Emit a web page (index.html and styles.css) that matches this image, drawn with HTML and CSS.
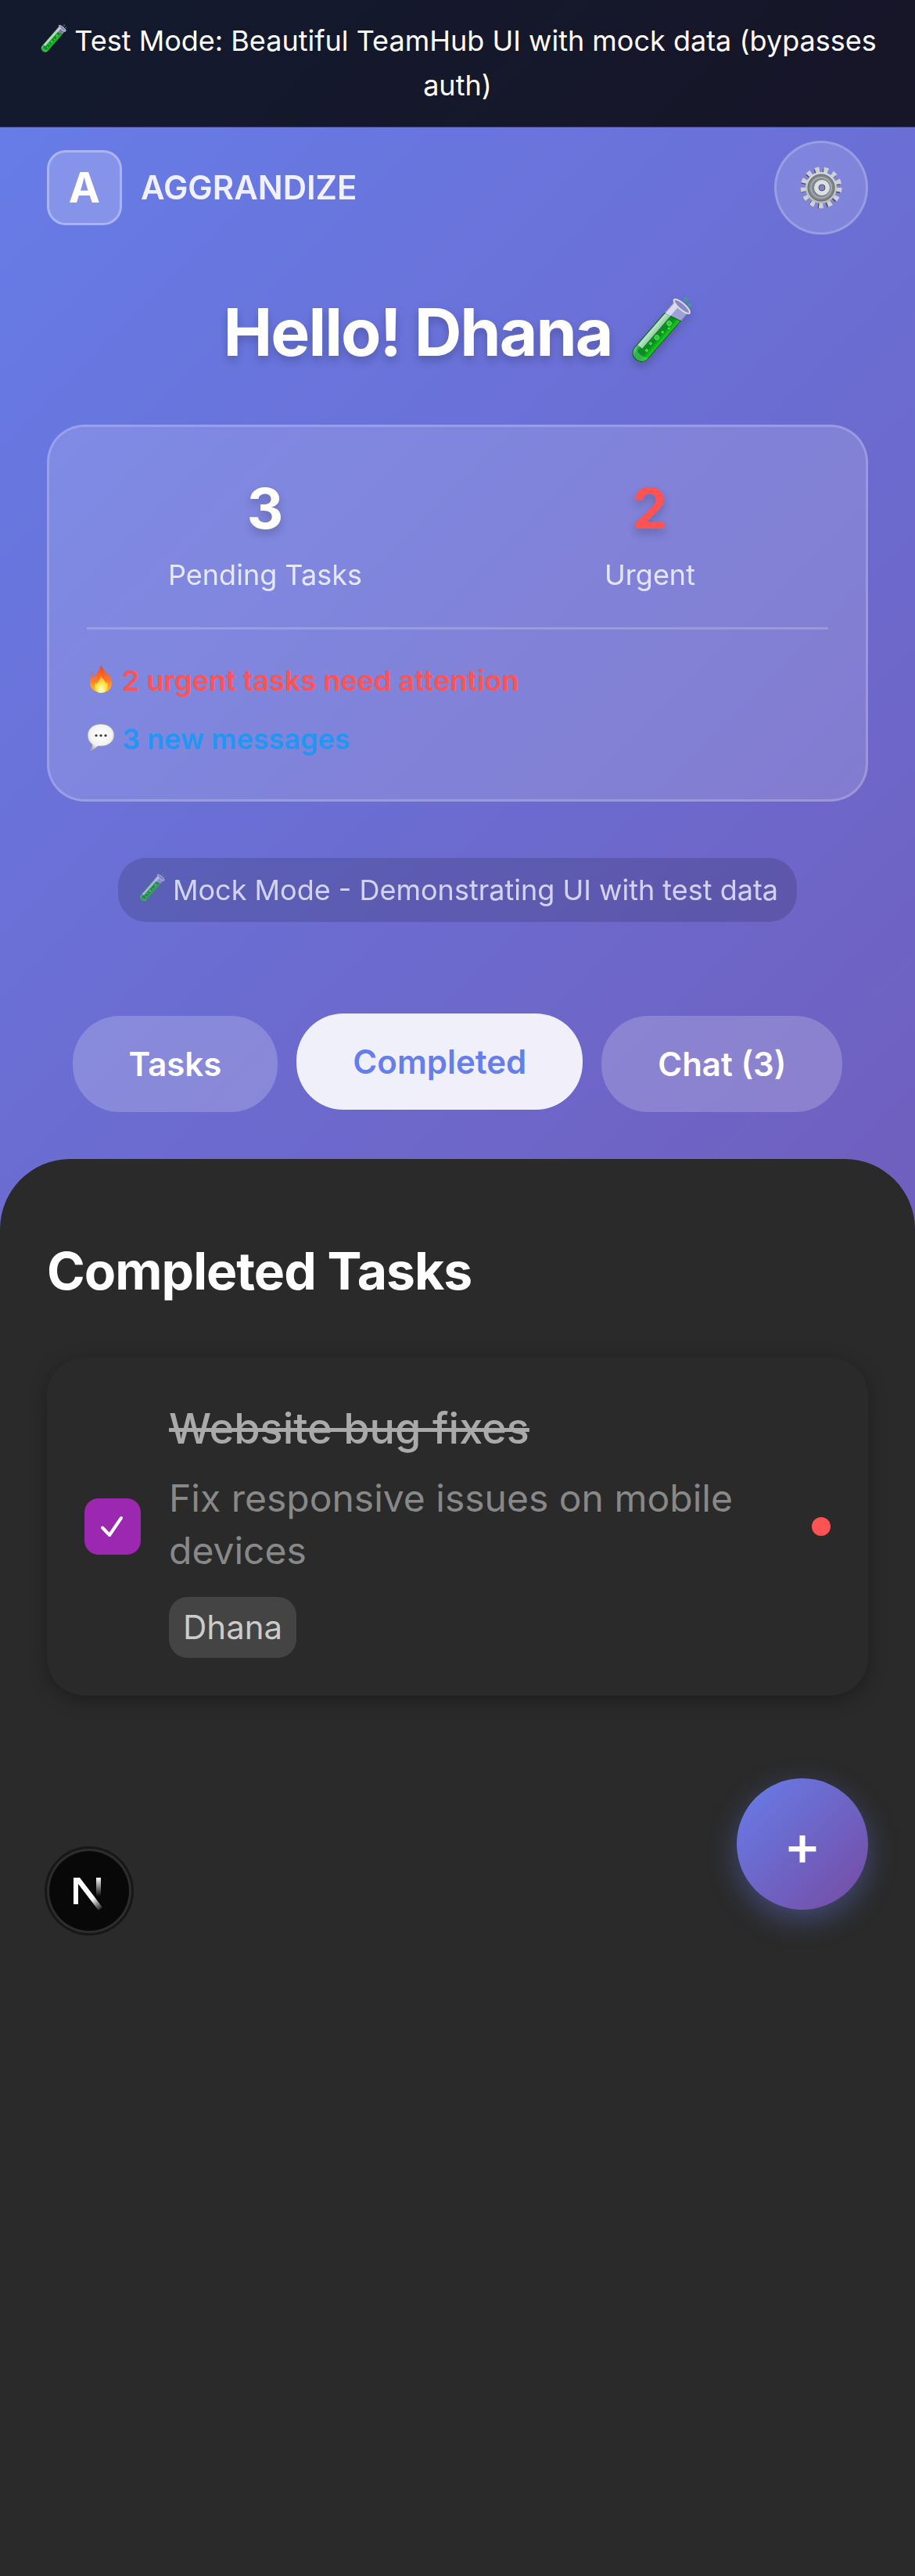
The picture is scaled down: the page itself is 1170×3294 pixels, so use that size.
FILE: index.html
```html
<!DOCTYPE html>
<html lang="en">
<head>
<meta charset="utf-8">
<meta name="viewport" content="width=device-width, initial-scale=1">
<title>Aggrandize TeamHub</title>
<link rel="stylesheet" href="styles.css">
</head>
<body>
<svg class="defs" aria-hidden="true">
  <defs>
    <linearGradient id="liquid" x1="0" y1="0" x2="1" y2="0">
      <stop offset="0" stop-color="#6fd08a"/><stop offset=".3" stop-color="#0c8a2c"/>
      <stop offset=".65" stop-color="#0a8f1c"/><stop offset="1" stop-color="#19d81d"/>
    </linearGradient>
    <linearGradient id="flame" x1="0" y1="0" x2="0" y2="1">
      <stop offset="0" stop-color="#f0401c"/><stop offset=".55" stop-color="#ff7a2a"/><stop offset="1" stop-color="#ffc42c"/>
    </linearGradient>
    <radialGradient id="core" cx=".5" cy=".8" r=".7">
      <stop offset="0" stop-color="#fffbe0"/><stop offset=".5" stop-color="#ffe94a"/><stop offset="1" stop-color="#ffb52e"/>
    </radialGradient>
    <radialGradient id="bubble" cx=".5" cy=".4" r=".6">
      <stop offset="0" stop-color="#ffffff"/><stop offset=".7" stop-color="#f2f2f2"/><stop offset="1" stop-color="#b4b4b8"/>
    </radialGradient>
    <linearGradient id="steel" x1="0" y1="0" x2="0" y2="1">
      <stop offset="0" stop-color="#d6dade"/><stop offset="1" stop-color="#b4b7ba"/>
    </linearGradient>
    <linearGradient id="fadeStem" x1="0" y1="0" x2="0" y2="1">
      <stop offset="0" stop-color="#fff"/><stop offset="1" stop-color="#fff" stop-opacity="0"/>
    </linearGradient>
    <linearGradient id="fadeLeg" gradientUnits="userSpaceOnUse" x1="24" y1="28" x2="36" y2="43">
      <stop offset="0" stop-color="#fff"/><stop offset="1" stop-color="#fff" stop-opacity="0"/>
    </linearGradient>
    <symbol id="tube" viewBox="0 0 84 84" overflow="visible">
      <g transform="translate(1 1) rotate(41 42 42)">
        <path d="M31-3V77a11 11 0 0 0 22 0V-3z" fill="#dfe3f4" fill-opacity=".5" stroke="#8d93a5" stroke-width="1"/>
        <path d="M31 19L53 13v64a11 11 0 0 1-22 0z" fill="url(#liquid)" stroke="#0c5c22" stroke-width="1"/>
        <path d="M32 0h7v72h-7z" fill="#fff" fill-opacity=".6"/>
        <path d="M31 76q11 7 22 0a11 11 0 0 1-22 0z" fill="#59d67a" fill-opacity=".5"/>
        <g fill="#2ecb3c" stroke="#8cf08d" stroke-width=".6"><circle cx="44" cy="25" r="3"/><circle cx="44" cy="49" r="3"/><circle cx="45" cy="39" r="1.300"/><circle cx="43" cy="60" r="1.500"/><circle cx="45" cy="70" r="1.500"/><circle cx="48" cy="30" r="1"/></g>
        <ellipse cx="42" cy="-2" rx="13" ry="4" fill="#8689c8" stroke="#e0dcd8" stroke-width="2"/>
      </g>
      <g fill="none" stroke="#2fae78" stroke-width="1.500"><circle cx="77" cy="1" r="2"/><circle cx="82" cy="8" r="1.500"/></g>
    </symbol>
  </defs>
</svg>

<p class="banner"><svg class="emoji" aria-hidden="true"><use href="#tube"/></svg> Test Mode: Beautiful TeamHub UI with mock data (bypasses auth)</p>

<header class="hero">
  <div class="topbar">
    <div class="brand"><span class="logo">A</span><span class="brand-name">AGGRANDIZE</span></div>
    <button class="settings" type="button" aria-label="Settings">
      <svg class="gear" viewBox="-27 -27 54 54" aria-hidden="true">
        <g fill="none" stroke="#4f4a48" stroke-width="8" transform="translate(-1 1)"><circle r="21.500" stroke-dasharray="5.400 4.991"/></g>
        <g fill="none" stroke="#cdd1d5" stroke-width="9"><circle r="22" stroke-dasharray="5.200 5.433"/></g>
        <circle r="20" fill="url(#steel)"/>
        <circle r="17" fill="#7d8589" stroke="#5f676b"/>
        <circle r="13" fill="none" stroke="#a5abae" stroke-width="2"/>
        <circle r="10" fill="#858c90"/>
        <circle cx="1" r="7" fill="none" stroke="#dcdfe4" stroke-width="6"/>
        <circle cx="1" r="4" fill="#7f82c8" stroke="#54585c"/>
      </svg>
    </button>
  </div>

  <h1 class="greeting">Hello! Dhana <svg class="emoji" aria-hidden="true"><use href="#tube"/></svg></h1>

  <section class="summary">
    <div class="stats">
      <div class="stat"><span class="stat-value">3</span><span class="stat-label">Pending Tasks</span></div>
      <div class="stat"><span class="stat-value urgent">2</span><span class="stat-label">Urgent</span></div>
    </div>
    <ul class="alerts">
      <li class="urgent"><svg class="emoji" viewBox="0 0 36 36" aria-hidden="true">
        <path d="M18 0c1 5 8 9 8 15 1-1 1-3 1-4 4 5 5 9 5 13 0 7-6 12-13 12S4 31 4 24c0-5 2-8 3-11 1 1 2 3 2 4 2-5 8-9 9-17zM7 9c-2 1-2 3-1 5 1-2 2-3 1-5z" fill="url(#flame)"/>
        <path d="M18 14c1 4 6 6 6 10l2-2c3 8-2 14-8 14S8 30 11 22l2 3c1-4 5-6 5-11z" fill="url(#core)"/>
      </svg> 2 urgent tasks need attention</li>
      <li class="info"><svg class="emoji" viewBox="0 0 36 36" aria-hidden="true">
        <path d="M18 1c10 0 17 6 17 14s-7 14-17 14h-4c-2 3-6 5-10 6 2-2 3-5 3-8-4-3-6-7-6-12C1 7 8 1 18 1z" fill="url(#bubble)" stroke="#9b9ba4" stroke-width=".5"/>
        <g fill="#333"><circle cx="12" cy="15.500" r="1.600"/><circle cx="18" cy="15.500" r="1.600"/><circle cx="24" cy="15.500" r="1.600"/></g>
      </svg> 3 new messages</li>
    </ul>
  </section>

  <p class="mode"><svg class="emoji" aria-hidden="true"><use href="#tube"/></svg> Mock Mode - Demonstrating UI with test data</p>

  <nav class="tabs">
    <button type="button" class="tab">Tasks</button>
    <button type="button" class="tab active" aria-current="page">Completed</button>
    <button type="button" class="tab">Chat (3)</button>
  </nav>
</header>

<main class="panel">
  <h2 class="panel-title">Completed Tasks</h2>
  <article class="task">
    <span class="check">
      <input type="checkbox" id="task-1" checked>
      <svg class="tick" viewBox="0 0 36 36" aria-hidden="true"><path d="M5 19.500L14 29 29 7" fill="none" stroke="#fff" stroke-width="4" stroke-linecap="round" stroke-linejoin="round"/></svg>
    </span>
    <div class="task-body">
      <label class="task-title" for="task-1">Website bug fixes</label>
      <p class="task-text">Fix responsive issues on mobile devices</p>
      <span class="tag">Dhana</span>
    </div>
    <span class="priority"></span>
  </article>
  <div class="actions">
    <button type="button" class="devtools" aria-label="Open developer tools">
      <svg viewBox="0 -8 40 52" aria-hidden="true">
        <path d="M3 1v34" stroke="#fff" stroke-width="6" fill="none"/>
        <path d="M0 1h8L37 39 32 43 6 9z" fill="url(#fadeLeg)"/>
        <path d="M29 1h6v24h-6z" fill="url(#fadeStem)"/>
      </svg>
    </button>
    <button type="button" class="add" aria-label="Add task">+</button>
  </div>
</main>
</body>
</html>
```
FILE: styles.css
```css
* { box-sizing: border-box; margin: 0; padding: 0; }

body {
  display: flex;
  flex-direction: column;
  min-height: 100vh;
  font: 400 36px/58px Inter, "Liberation Sans", sans-serif;
  color: #fff;
  background: linear-gradient(135deg, #667eea 0%, #764ba2 100%);
}

button { font: inherit; color: inherit; border: 0; cursor: pointer; }

.defs { position: absolute; width: 0; height: 0; }

.emoji {
  width: 1em;
  height: 1em;
  vertical-align: -3px;
  overflow: visible;
}

.banner {
  padding: 24px 36px;
  line-height: 57px;
  text-align: center;
  background: linear-gradient(135deg, #131a2e, #171528);
  border-bottom: 1px solid #3e4284;
}

.hero {
  display: flex;
  flex-direction: column;
  padding: 17px 60px 60px;
}

.topbar {
  display: flex;
  align-items: center;
  justify-content: space-between;
}

.brand { display: flex; align-items: center; gap: 24px; }

.logo {
  display: grid;
  place-items: center;
  width: 96px;
  height: 96px;
  font-size: 54px;
  font-weight: 700;
  background: rgba(255, 255, 255, .2);
  border: 3px solid rgba(255, 255, 255, .3);
  border-radius: 24px;
}

.brand-name { font-size: 42px; font-weight: 600; opacity: .9; }

.settings {
  display: grid;
  place-items: center;
  width: 120px;
  height: 120px;
  background: rgba(255, 255, 255, .15);
  border: 3px solid rgba(255, 255, 255, .2);
  border-radius: 50%;
}

.gear { width: 54px; height: 54px; }

.greeting {
  margin: 60px 0 53px;
  font-size: 84px;
  line-height: 130px;
  font-weight: 700;
  letter-spacing: -2px;
  text-align: center;
  text-shadow: 0 6px 12px rgba(0, 0, 0, .2);
}

.greeting .emoji {
  vertical-align: -11px;
  filter: drop-shadow(0 6px 6px rgba(0, 0, 0, .2));
}

.summary {
  padding: 48px;
  background: rgba(255, 255, 255, .15);
  border: 3px solid rgba(255, 255, 255, .2);
  border-radius: 48px;
}

.stats {
  display: grid;
  grid-template-columns: 1fr 1fr;
  gap: 36px;
  padding-bottom: 38px;
  border-bottom: 3px solid rgba(255, 255, 255, .2);
}

.stat { display: flex; flex-direction: column; align-items: center; }

.stat-value {
  font-size: 72px;
  line-height: 112px;
  font-weight: 700;
  text-shadow: 0 6px 12px rgba(0, 0, 0, .2);
}

.stat-label { opacity: .8; }

.alerts {
  display: flex;
  flex-direction: column;
  gap: 17px;
  padding-top: 36px;
  font-weight: 600;
  list-style: none;
}

.urgent { color: #ff5252; }
.info { color: #2196f3; }

.mode {
  align-self: center;
  margin: 72px 0 120px;
  padding: 12px 24px;
  background: rgba(0, 0, 0, .2);
  border-radius: 36px;
  opacity: .7;
}

.tabs { display: flex; justify-content: center; gap: 24px; }

.tab {
  padding: 36px 72px;
  font-size: 42px;
  line-height: 51px;
  font-weight: 600;
  background: rgba(255, 255, 255, .2);
  border-radius: 60px;
}

.tab.active {
  color: #667eea;
  background: rgba(255, 255, 255, .9);
  transform: translateY(-3px);
}

.panel {
  flex: 1;
  padding: 90px 60px;
  background: #2a2a2a;
  border-radius: 90px 90px 0 0;
}

.panel-title {
  margin-bottom: 58px;
  font-size: 66px;
  line-height: 106px;
  font-weight: 700;
  letter-spacing: -1px;
}

.task {
  display: flex;
  align-items: center;
  gap: 36px;
  padding: 48px;
  background: #2a2a2a;
  border-radius: 48px;
  box-shadow: 0 6px 24px rgba(0, 0, 0, .3);
}

.check { display: grid; place-items: center; }
.check > * { grid-area: 1 / 1; }

.check input {
  appearance: none;
  width: 72px;
  height: 72px;
  background: #9c27b0;
  border-radius: 18px;
}

.tick { width: 36px; height: 36px; pointer-events: none; }

.task-body {
  display: flex;
  flex: 1;
  flex-direction: column;
  align-items: flex-start;
}

.task-title {
  margin-bottom: 12px;
  font-size: 54px;
  line-height: 86px;
  font-weight: 500;
  color: #aaa;
  text-decoration: line-through;
}

.task-text {
  margin-bottom: 26px;
  font-size: 48px;
  line-height: 67px;
  color: #888;
}

.tag {
  padding: 6px 18px;
  font-size: 42px;
  line-height: 66px;
  color: #ccc;
  background: #444;
  border-radius: 24px;
}

.priority {
  width: 24px;
  height: 24px;
  background: #ff5252;
  border-radius: 50%;
}

.actions {
  display: flex;
  align-items: flex-end;
  justify-content: space-between;
  padding-top: 106px;
}

.devtools {
  display: grid;
  place-items: center;
  width: 102px;
  height: 102px;
  margin: 0 3px;
  background: #080808;
  border-radius: 50%;
  box-shadow: 0 0 0 3px #2d2d2d, 0 0 0 6px #171717;
}

.devtools svg { width: 40px; height: 52px; }

.add {
  width: 168px;
  height: 168px;
  margin-bottom: 27px;
  font-size: 72px;
  line-height: 87px;
  font-weight: 500;
  background: linear-gradient(135deg, #667eea, #764ba2);
  border-radius: 50%;
  box-shadow: 0 12px 36px rgba(102, 126, 234, .4);
}
```
